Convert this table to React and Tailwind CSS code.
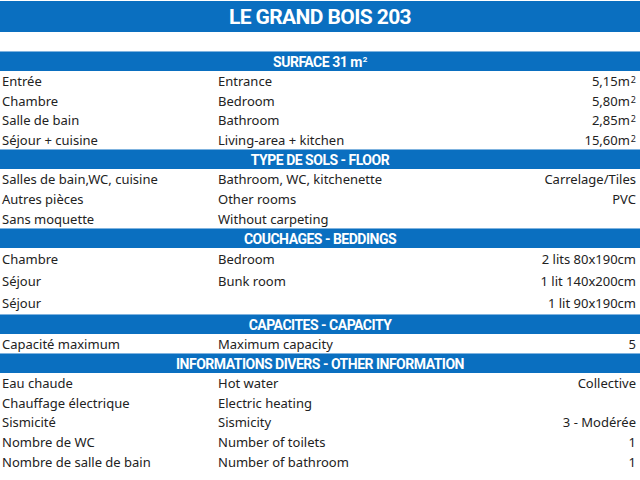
import React from 'react';

const Sq = () => <sup className="text-[9px] leading-none relative -top-[3px] ml-[1px]">2</sup>;

const sections = [
  {
    title: (
      <>
        SURFACE 31 m<sup className="text-[8px] leading-none relative -top-[2px] ml-[1px]">2</sup>
      </>
    ),
    h: 'h-[19.5px]',
    rows: [
      ['Entrée', 'Entrance', '5,15m', true],
      ['Chambre', 'Bedroom', '5,80m', true],
      ['Salle de bain', 'Bathroom', '2,85m', true],
      ['Séjour + cuisine', 'Living-area + kitchen', '15,60m', true],
    ],
  },
  {
    title: 'TYPE DE SOLS - FLOOR',
    h: 'h-[19.67px]',
    rows: [
      ['Salles de bain,WC, cuisine', 'Bathroom, WC, kitchenette', 'Carrelage/Tiles'],
      ['Autres pièces', 'Other rooms', 'PVC'],
      ['Sans moquette', 'Without carpeting', ''],
    ],
  },
  {
    title: 'COUCHAGES - BEDDINGS',
    h: 'h-[22px]',
    rows: [
      ['Chambre', 'Bedroom', '2 lits 80x190cm'],
      ['Séjour', 'Bunk room', '1 lit 140x200cm'],
      ['Séjour', '', '1 lit 90x190cm'],
    ],
  },
  {
    title: 'CAPACITES - CAPACITY',
    h: 'h-[19px]',
    rows: [['Capacité maximum', 'Maximum capacity', '5']],
  },
  {
    title: 'INFORMATIONS DIVERS - OTHER INFORMATION',
    h: 'h-[19.6px]',
    rows: [
      ['Eau chaude', 'Hot water', 'Collective'],
      ['Chauffage électrique', 'Electric heating', ''],
      ['Sismicité', 'Sismicity', '3 - Modérée'],
      ['Nombre de WC', 'Number of toilets', '1'],
      ['Nombre de salle de bain', 'Number of bathroom', '1'],
    ],
  },
];

const Band = ({ children }) => (
  <div className="h-[20px] bg-[#0a6fc0] border-t border-[#7fb3df] flex items-center justify-center pt-[1px] text-white font-bold text-[14px] tracking-[-0.5px] font-['Roboto',sans-serif] leading-none">
    {children}
  </div>
);

const App = () => {
  return (
    <div className="w-[640px] h-[480px] bg-white overflow-hidden font-['Lato','Liberation Sans',sans-serif] text-[13px] text-[#222222] pt-[1px]">
      <div className="h-[31px] bg-[#0a6fc0] flex items-center justify-center pt-[2px] text-white font-bold text-[21px] tracking-[-0.6px] font-['Roboto',sans-serif] leading-none">
        LE GRAND BOIS 203
      </div>
      <div className="h-[19px]"></div>

      {sections.map((s, i) => (
        <div key={i}>
          <Band>{s.title}</Band>
          {s.rows.map(([fr, en, val, sq], j) => (
            <div key={j} className={`${s.h} grid grid-cols-[216px_1fr_auto] items-center pt-[2px] pl-[2px] pr-[4px] leading-none`}>
              <span>{fr}</span>
              <span>{en}</span>
              <span className="text-right">
                {val}
                {sq && <Sq />}
              </span>
            </div>
          ))}
        </div>
      ))}
    </div>
  );
};

export default App;
